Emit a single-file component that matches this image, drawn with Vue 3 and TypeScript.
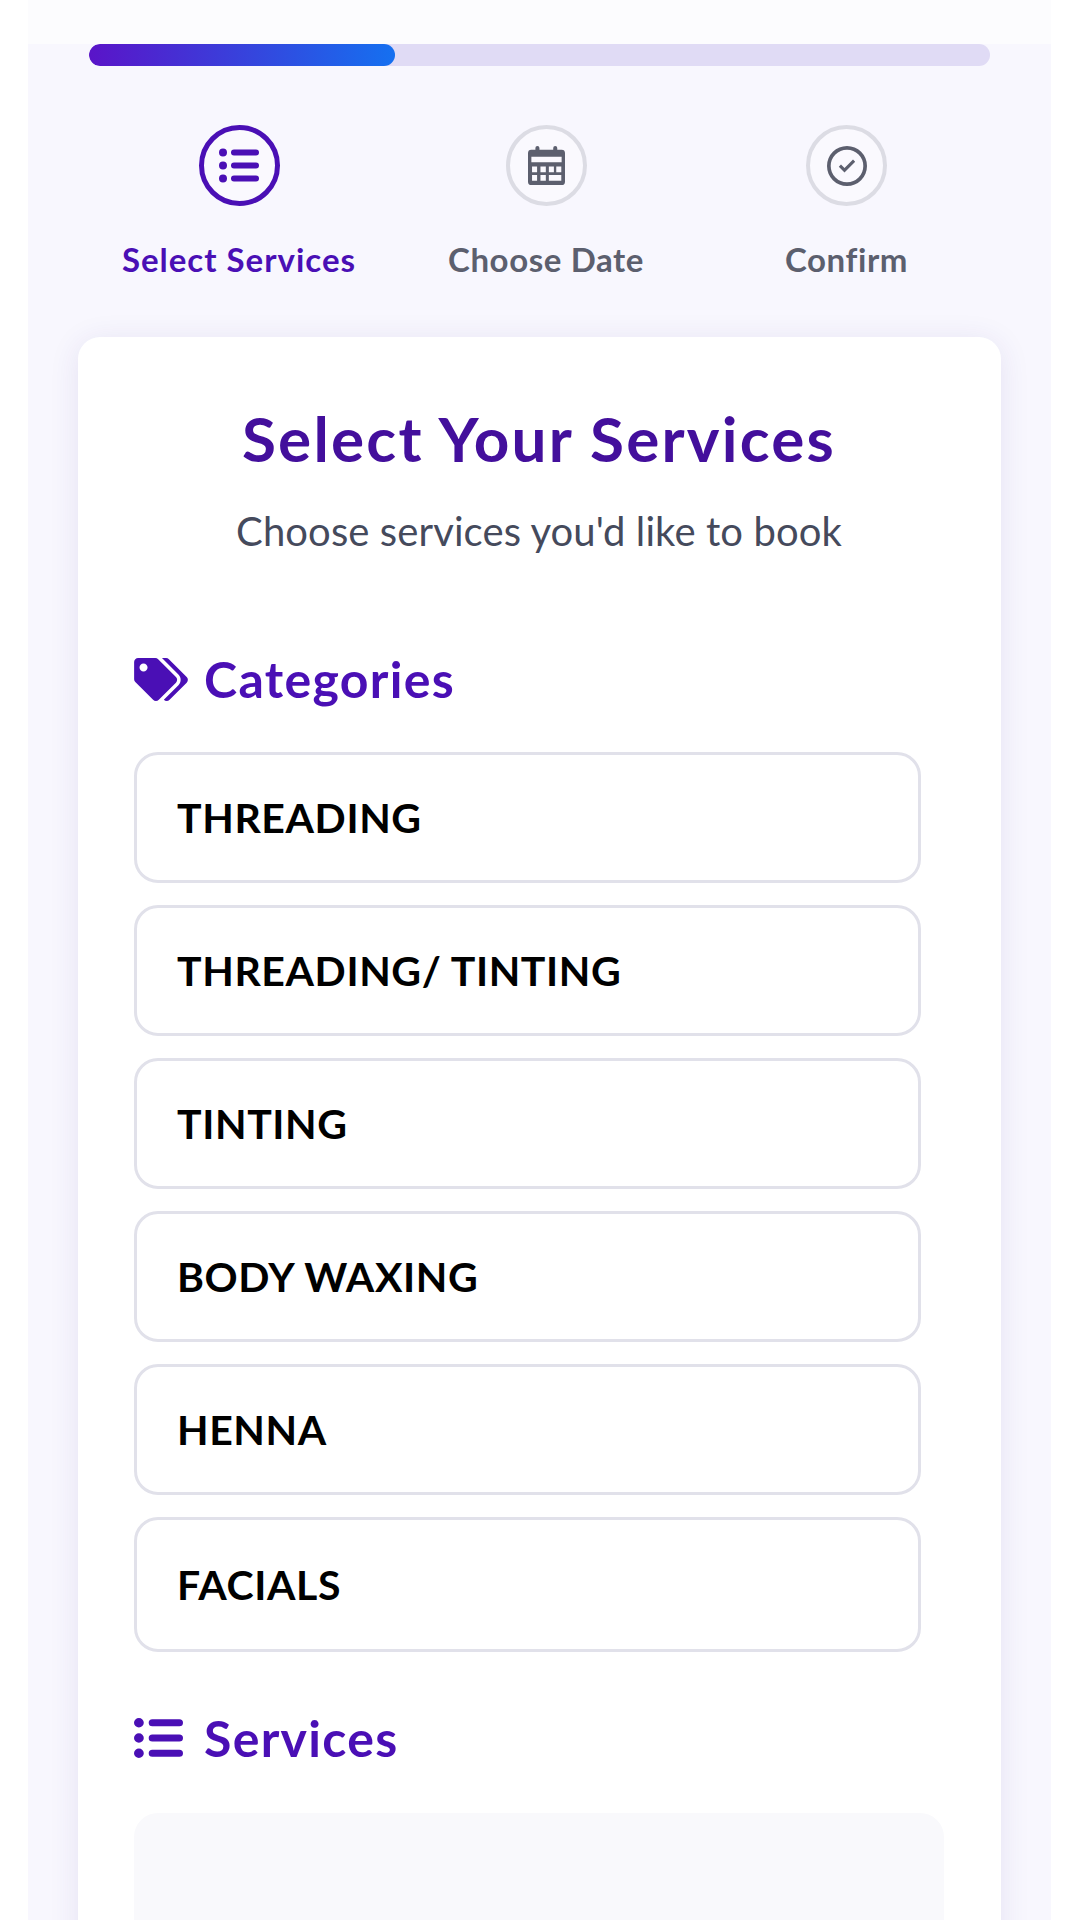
<script setup lang="ts">
    interface StepIcon {
        box: string
        w: number
        h: number
        d: string
    }

    interface Step {
        label: string
        icon: StepIcon
        active: boolean
    }

    const listPath = 'M4 0a4 4 0 1 0 0 8a4 4 0 1 0 0-8zm0 13a4 4 0 1 0 0 8a4 4 0 1 0 0-8zm0 13a4 4 0 1 0 0 8a4 4 0 1 0 0-8zM15 1h22a3 3 0 0 1 0 6H15a3 3 0 0 1 0-6zm0 13h22a3 3 0 0 1 0 6H15a3 3 0 0 1 0-6zm0 13h22a3 3 0 0 1 0 6H15a3 3 0 0 1 0-6z'

    const calendarPath = 'M10 11H100a10 10 0 0 1 10 10V106a10 10 0 0 1-10 10H10a10 10 0 0 1-10-10V21a10 10 0 0 1 10-10zM22 6a6 6 0 0 1 12 0V11H22zM75 6a6 6 0 0 1 12 0V11H75zM10 32h90v16H10zM12 61h15v17H12zM37 61h16v17H37zM62 61h15v17H62zM84 61h15v17H84zM12 86h15v17H12zM37 86h16v17H37zM62 86h37v17H62z'

    const checkPath = 'M20 0a20 20 0 1 0 0 40a20 20 0 1 0 0-40zM20 3.7a16.3 16.3 0 1 1 0 32.6a16.3 16.3 0 1 1 0-32.6zM11.8 20.8L14 18.6L17.5 22.1L26 13.6L28.2 15.8L17.5 26.5z'

    const tagsPath = 'M497.941 225.941L286.059 14.059A48 48 0 0 0 252.118 0H48C21.49 0 0 21.49 0 48v204.118a48 48 0 0 0 14.059 33.941l211.882 211.882c18.744 18.745 49.136 18.746 67.882 0l204.118-204.118c18.745-18.745 18.745-49.137 0-67.882zM112 160c-26.51 0-48-21.49-48-48s21.49-48 48-48 48 21.49 48 48-21.49 48-48 48zm513.941 133.823L421.823 497.941c-18.745 18.745-49.137 18.745-67.882 0l-.36-.36L527.64 323.522c16.999-16.999 26.36-39.6 26.36-63.64s-9.362-46.641-26.36-63.64L331.397 0h48.721a48 48 0 0 1 33.941 14.059l211.882 211.882c18.745 18.745 18.745 49.137 0 67.882z'

    const steps: Step[] = [
        { label: 'Select Services', icon: { box: '0 0 40 34', w: 40, h: 35, d: listPath }, active: true },
        { label: 'Choose Date', icon: { box: '0 0 110 116', w: 37, h: 39, d: calendarPath }, active: false },
        { label: 'Confirm', icon: { box: '0 0 40 40', w: 40, h: 40, d: checkPath }, active: false },
    ]

    const categories = ['THREADING', 'THREADING/ TINTING', 'TINTING', 'BODY WAXING', 'HENNA', 'FACIALS']
</script>

<template>
    <div class="page">
        <div class="topband"></div>
        <div class="progress">
            <div class="progress__fill"></div>
        </div>

        <div class="steps">
            <div v-for="step in steps" :key="step.label" class="step" :class="{ 'is-active': step.active }">
                <div class="step__circle">
                    <svg :viewBox="step.icon.box" :width="step.icon.w" :height="step.icon.h" fill="currentColor" fill-rule="evenodd">
                        <path :d="step.icon.d" />
                    </svg>
                </div>
                <div class="step__label">{{ step.label }}</div>
            </div>
        </div>

        <div class="card">
            <h1 class="card__title">Select Your Services</h1>
            <p class="card__sub">Choose services you'd like to book</p>

            <h2 class="heading heading--first">
                <span class="heading__slot">
                    <svg viewBox="0 0 640 512" width="54" height="43" fill="currentColor">
                        <path :d="tagsPath" />
                    </svg>
                </span>
                Categories
            </h2>
            <div class="list">
                <div v-for="name in categories" :key="name" class="list__item">{{ name }}</div>
            </div>

            <h2 class="heading heading--services">
                <span class="heading__slot">
                    <svg viewBox="0 0 40 34" width="49" height="40" preserveAspectRatio="none" fill="currentColor">
                        <path :d="listPath" />
                    </svg>
                </span>
                Services
            </h2>
            <div class="panel"></div>
        </div>
    </div>
</template>

<style>
    html,
    body {
        margin: 0;
        height: 1920px;
        overflow: hidden;
        background: #fff;
    }
</style>

<style scoped>
    .page {
        width: 1023px;
        height: 1920px;
        margin-left: 28px;
        box-sizing: border-box;
        overflow: hidden;
        background: #f8f7fe;
        font-family: 'Lato', 'Noto Sans', sans-serif;
    }

    .topband {
        height: 44px;
        background: #fcfcfe;
    }

    .progress {
        height: 22px;
        margin: 0 61px;
        border-radius: 11px;
        background: #e0dbf5;
        overflow: hidden;
    }

    .progress__fill {
        width: 34%;
        height: 100%;
        border-radius: 11px;
        background: linear-gradient(90deg, #5a14c8, #1570f0);
    }

    .steps {
        display: grid;
        grid-template-columns: 300px 314px 287px;
        margin: 59px 61px 0;
    }

    .step {
        display: flex;
        flex-direction: column;
        align-items: center;
        gap: 34px;
        color: #5c5f6e;
    }

    .step.is-active {
        color: #4a0fb5;
    }

    .step__circle {
        width: 81px;
        height: 81px;
        box-sizing: border-box;
        border: 4px solid #dcdce4;
        border-radius: 50%;
        display: flex;
        align-items: center;
        justify-content: center;
        background: #faf9fe;
    }

    .step.is-active .step__circle {
        border: 5px solid #4a0fb5;
    }

    .step__label {
        font-size: 33px;
        font-weight: 700;
        line-height: 38px;
        letter-spacing: 0.6px;
        white-space: nowrap;
    }

    .step.is-active .step__label {
        letter-spacing: 1px;
    }

    .card {
        margin: 59px 50px 0;
        height: 1700px;
        box-sizing: border-box;
        padding: 66px 57px 0 56px;
        border-radius: 22px;
        background: #fff;
        box-shadow: 0 4px 30px rgba(60, 40, 140, 0.1);
    }

    .card__title {
        margin: 0;
        text-align: center;
        font-size: 62px;
        line-height: 70px;
        font-weight: 700;
        letter-spacing: 2.2px;
        color: #430f9c;
    }

    .card__sub {
        margin: 34px 0 0;
        text-align: center;
        font-size: 40px;
        line-height: 48px;
        font-weight: 400;
        letter-spacing: 0.1px;
        color: #454a5c;
    }

    .heading {
        display: flex;
        align-items: center;
        gap: 16px;
        margin: 0;
        font-size: 50px;
        line-height: 56px;
        font-weight: 700;
        letter-spacing: 1.3px;
        color: #4a0fb5;
    }

    .heading--first {
        margin-top: 96px;
    }

    .heading--services {
        margin-top: 58px;
    }

    .heading__slot {
        width: 54px;
        display: flex;
        flex: 0 0 auto;
    }

    .list {
        display: flex;
        flex-direction: column;
        gap: 22px;
        margin: 45px 23px 0 0;
    }

    .list__item {
        height: 131px;
        box-sizing: border-box;
        display: flex;
        align-items: center;
        padding-left: 40px;
        border: 3px solid #e1e1ea;
        border-radius: 24px;
        font-size: 41px;
        font-weight: 700;
        letter-spacing: 0.6px;
        color: #000;
        background: #fff;
    }

    .list__item:last-child {
        height: 135px;
    }

    .panel {
        margin-top: 47px;
        height: 300px;
        border-radius: 24px;
        background: #f9f9fc;
    }
</style>
